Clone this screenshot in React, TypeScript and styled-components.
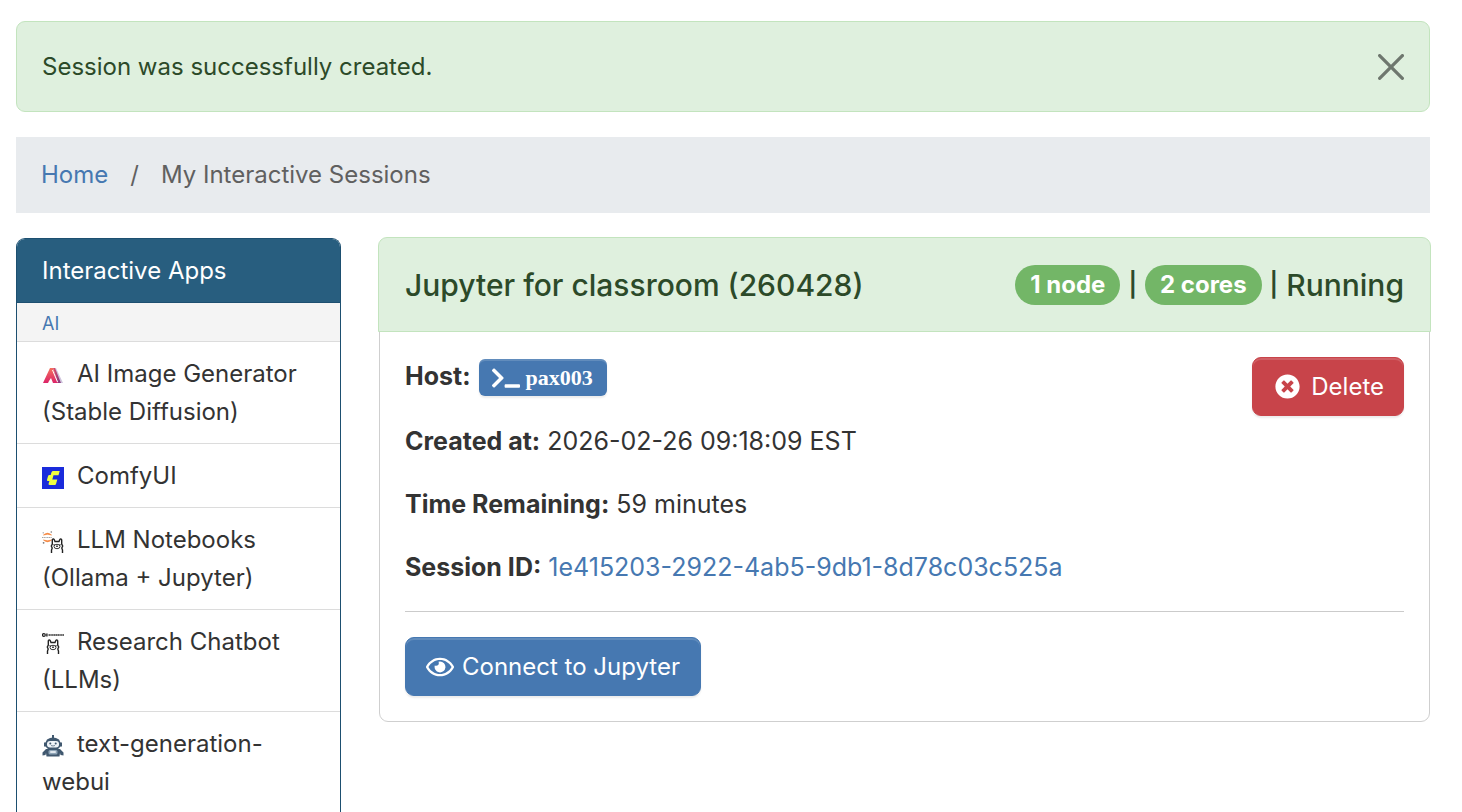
import React from "react";
import styled, { createGlobalStyle } from "styled-components";
import { FaRegEye, FaTerminal, FaTimesCircle } from "react-icons/fa";

const GlobalStyle = createGlobalStyle`
  *, *::before, *::after { box-sizing: border-box; }
  body {
    margin: 0;
    background: #fff;
    color: #333;
    font-family: Inter, "Liberation Sans", sans-serif;
    font-size: 24px;
    line-height: 38px;
  }
  a { color: #4678b1; text-decoration: none; }
  p, h1, h2, ol, ul { margin: 0; padding: 0; font: inherit; }
  ol, ul { list-style: none; }
  b { font-weight: 700; }
`;

const Page = styled.div`
  padding: 21px 32px 0 16px;
`;

const Alert = styled.div`
  display: flex;
  align-items: center;
  justify-content: space-between;
  padding: 26px 25px 25px;
  border: 1px solid #c3e4be;
  border-radius: 9px;
  background: #dff0de;
  color: #2c4a29;
`;

const CloseButton = styled.button`
  display: flex;
  padding: 0;
  border: 0;
  background: none;
  color: #000;
  opacity: 0.5;
  cursor: pointer;
`;

const Breadcrumb = styled.nav`
  margin: 25px 0;
  padding: 19px 25px;
  background: #e8ebee;
  color: #606060;

  ol { display: flex; }
  li + li::before { content: "/"; padding: 0 22px; }
`;

const Columns = styled.main`
  display: grid;
  grid-template-columns: repeat(12, minmax(0, 1fr));
  column-gap: 38px;
  align-items: start;
`;

const Sidebar = styled.aside`
  grid-column: span 3;
  border: 1px solid #1d4f70;
  border-bottom: 0;
  border-radius: 9px 9px 0 0;
  overflow: hidden;
`;

const SidebarTitle = styled.h2`
  padding: 13px 25px 12px;
  border-bottom: 1px solid #1d4f70;
  background: #285e7f;
  color: #fff;
`;

const Category = styled.p`
  padding: 7px 25px 3px;
  border-bottom: 1px solid #dcdcdc;
  background: #f4f4f4;
  color: #4678b1;
  font-size: 18px;
  line-height: 28px;
`;

const AppLink = styled.a`
  display: block;
  padding: 13px 25px 12px;
  border-bottom: 1px solid #dcdcdc;
  color: #333;

  svg {
    width: 22px;
    height: 22px;
    margin-right: 13px;
    vertical-align: -5px;
  }
`;

const Card = styled.section`
  grid-column: span 9;
  border: 1px solid #cfcfcf;
  border-radius: 9px;
`;

const CardHeader = styled.header`
  display: flex;
  align-items: center;
  justify-content: space-between;
  margin: -2px -2px 0;
  padding: 27px 26px 26px;
  border: 1px solid #c3e4be;
  border-radius: 9px 9px 0 0;
  background: #dff0de;
  color: #2c4a29;
  font-size: 30px;
  font-weight: 500;
  line-height: 40px;
`;

const Status = styled.div`
  display: flex;
  align-items: center;
  gap: 8px;
`;

const Pill = styled.span`
  padding: 0 15px;
  border-radius: 20px;
  background: #73b667;
  color: #fff;
  font-size: 24px;
  font-weight: 700;
`;

const Separator = styled.span`
  font-size: 24px;
  font-weight: 600;
`;

const CardBody = styled.div`
  padding: 25px;
`;

const Summary = styled.div`
  display: flex;
  align-items: flex-start;
  justify-content: space-between;
`;

const Details = styled.div`
  display: flex;
  flex-direction: column;
  gap: 25px;
  font-size: 25px;
`;

const Host = styled.p`
  display: flex;
  gap: 8px;
  height: 40px;
`;

const HostLink = styled.a`
  display: flex;
  align-items: center;
  gap: 6px;
  height: 37px;
  margin-top: 2px;
  padding: 0 14px 0 13px;
  border-radius: 6px;
  background: #4678b1;
  box-shadow: inset 0 2px 0 rgba(255, 255, 255, 0.15), 0 2px 2px rgba(0, 0, 0, 0.08);
  color: #fff;
  font-family: "Liberation Serif", serif;
  font-size: 22px;
  font-weight: 700;
`;

const Button = styled.button<{ $tone: "primary" | "danger" }>`
  display: flex;
  align-items: center;
  gap: ${(p) => (p.$tone === "danger" ? 11 : 8)}px;
  height: 59px;
  padding: ${(p) => (p.$tone === "danger" ? "0 19px 0 22px" : "0 20px")};
  border: 1px solid ${(p) => (p.$tone === "danger" ? "#c8444a" : "#4678b1")};
  border-radius: 9px;
  background: ${(p) => (p.$tone === "danger" ? "#c8444a" : "#4678b1")};
  box-shadow: inset 0 2px 0 rgba(255, 255, 255, 0.15), 0 2px 2px rgba(0, 0, 0, 0.08);
  color: #fff;
  font: inherit;
  cursor: pointer;
`;

const Divider = styled.hr`
  margin: 25px 0;
  border: 0;
  border-top: 1px solid #cbcbcb;
`;

const CloseIcon = () => (
  <svg width="26" height="26" viewBox="0 0 16 16" fill="currentColor" aria-hidden="true">
    <path d="M.293.293a1 1 0 0 1 1.414 0L8 6.586 14.293.293a1 1 0 1 1 1.414 1.414L9.414 8l6.293 6.293a1 1 0 0 1-1.414 1.414L8 9.414l-6.293 6.293a1 1 0 0 1-1.414-1.414L6.586 8 .293 1.707a1 1 0 0 1 0-1.414z" />
  </svg>
);

const DiffusionIcon = () => (
  <svg viewBox="0 0 22 22" aria-hidden="true">
    <defs>
      <linearGradient id="diffLeft" x1="0" y1="0" x2="0" y2="1">
        <stop offset="0" stopColor="#f4715c" />
        <stop offset="1" stopColor="#dc2368" />
      </linearGradient>
      <linearGradient id="diffRight" x1="0" y1="0" x2="1" y2="1">
        <stop offset="0" stopColor="#e04a68" />
        <stop offset="1" stopColor="#7d3a80" />
      </linearGradient>
    </defs>
    <path d="M12 3h2l7 15h-2z" fill="#cfc4dc" />
    <path d="M8 3h3l5 15h-5l-2-5-2 3-1 2H1z" fill="url(#diffLeft)" />
    <path d="M11 3h2l6 15h-3z" fill="url(#diffRight)" />
    <path d="M10.500 5l5 12" stroke="#fff" strokeWidth="1" />
  </svg>
);

const ComfyIcon = () => (
  <svg viewBox="0 0 22 22" aria-hidden="true">
    <path d="M0 0h22v22H0z" fill="#1a2bdb" />
    <path
      d="M10.500 4h7.200l-1.200 4.200h-5l-1.200 4.300h5l-1.200 4.200q-.3 1.300-1.300 1.300h-5q-1.600 0-1.200-1.500l.8-2.500h-1.500q-1.200 0-.9-1.200l1-3.600q.3-1.200 1.500-1.200h1.200l.8-2.700q.4-1.300 1.800-1.300z"
      fill="#f0ff41"
    />
  </svg>
);

const Llama = () => (
  <g fill="none" stroke="#222" strokeWidth="1.400">
    <path d="M1.500 15v-3l.7-2-.9-2 1-2V1.800Q3.300 0 4.300 1.800L5 3.500h4l.7-1.700q1-1.800 2 0V6l1 2-.9 2 .7 2v3" />
    <ellipse cx="7" cy="8.500" rx="3" ry="2.200" strokeWidth=".9" />
    <path d="M3.500 6.800h1M9.500 6.800h1M6.200 8.300h1.600" />
  </g>
);

const NotebookIcon = () => (
  <svg viewBox="0 0 22 22" aria-hidden="true">
    <path d="M1.500 4q4-3.500 8 0-4-1.600-8 0zM1.500 9q4 3.500 8 0-4 1.600-8 0z" fill="#f37726" stroke="#f37726" strokeWidth=".6" />
    <path d="M0 6.500h10" stroke="#a5a5a5" strokeWidth="1.200" strokeDasharray="1.200 .5" />
    <g fill="#777">
      <circle cx="9.300" cy="1" r=".8" />
      <circle cx="1.200" cy="1.800" r=".6" />
      <circle cx="1.600" cy="11.800" r=".9" />
    </g>
    <g transform="translate(8 7)"><Llama /></g>
  </svg>
);

const ChatbotIcon = () => (
  <svg viewBox="0 0 22 22" aria-hidden="true">
    <circle cx="1.900" cy="2" r="1.400" fill="none" stroke="#222" strokeWidth="1.200" />
    <path d="M4.900.5v3" stroke="#222" strokeWidth="1.400" />
    <path d="M6.500 2h15.500" stroke="#333" strokeWidth="1.400" strokeDasharray="1.500 .3" />
    <g transform="translate(4 6)"><Llama /></g>
  </svg>
);

const RobotIcon = () => (
  <svg viewBox="0 0 22 22" aria-hidden="true">
    <g fill="#40586f">
      <path d="M10 0h2v4h-2z" />
      <path d="M5 4.500q6-4 12 0l1.500 3h1.500v4h-1.500L16 14H6l-2.500-2.500H2v-4h1.500z" />
      <path d="M4 14h14l3.500 3.500V20.500l-3-.5-.5-2-.5 3.500h-13L4 18l-.5 2-3 .5v-3z" />
    </g>
    <rect x="5" y="6" width="12" height="6.500" rx="3" fill="#eef3f7" />
    <circle cx="8.300" cy="8.500" r="1" fill="#40586f" />
    <circle cx="13.700" cy="8.500" r="1" fill="#40586f" />
    <path d="M9 10.500q2 1 4 0" stroke="#40586f" strokeWidth=".7" fill="none" />
    <rect x="6.500" y="15" width="9" height="4.500" rx="1.500" fill="#8fa5b8" />
    <rect x="8" y="16" width="6" height="2" rx="1" fill="#dfe7ee" />
  </svg>
);

const apps = [
  { name: "AI Image Generator (Stable Diffusion)", Icon: DiffusionIcon },
  { name: "ComfyUI", Icon: ComfyIcon },
  { name: "LLM Notebooks (Ollama + Jupyter)", Icon: NotebookIcon },
  { name: "Research Chatbot (LLMs)", Icon: ChatbotIcon },
  { name: "text-generation-webui", Icon: RobotIcon },
];

export default function App() {
  return (
    <>
      <GlobalStyle />
      <Page>
        <Alert role="alert">
          <span>Session was successfully created.</span>
          <CloseButton type="button" aria-label="Close">
            <CloseIcon />
          </CloseButton>
        </Alert>

        <Breadcrumb aria-label="breadcrumb">
          <ol>
            <li><a href="#home">Home</a></li>
            <li aria-current="page">My Interactive Sessions</li>
          </ol>
        </Breadcrumb>

        <Columns>
          <Sidebar>
            <SidebarTitle>Interactive Apps</SidebarTitle>
            <Category>AI</Category>
            <nav aria-label="Interactive Apps">
              {apps.map(({ name, Icon }) => (
                <AppLink href="#app" key={name}>
                  <Icon />
                  {name}
                </AppLink>
              ))}
            </nav>
          </Sidebar>

          <Card>
            <CardHeader>
              <h1>Jupyter for classroom (260428)</h1>
              <Status>
                <Pill>1 node</Pill>
                <Separator>|</Separator>
                <Pill>2 cores</Pill>
                <Separator>|</Separator>
                <span>Running</span>
              </Status>
            </CardHeader>
            <CardBody>
              <Summary>
                <Details>
                  <Host>
                    <b>Host:</b>
                    <HostLink href="#shell">
                      <FaTerminal size={28} aria-hidden="true" />
                      pax003
                    </HostLink>
                  </Host>
                  <p><b>Created at:</b> 2026-02-26 09:18:09 EST</p>
                  <p><b>Time Remaining:</b> 59 minutes</p>
                  <p><b>Session ID:</b> <a href="#session">1e415203-2922-4ab5-9db1-8d78c03c525a</a></p>
                </Details>
                <Button type="button" $tone="danger">
                  <FaTimesCircle size={25} aria-hidden="true" />
                  Delete
                </Button>
              </Summary>
              <Divider />
              <Button type="button" $tone="primary">
                <FaRegEye size={28} aria-hidden="true" />
                Connect to Jupyter
              </Button>
            </CardBody>
          </Card>
        </Columns>
      </Page>
    </>
  );
}
